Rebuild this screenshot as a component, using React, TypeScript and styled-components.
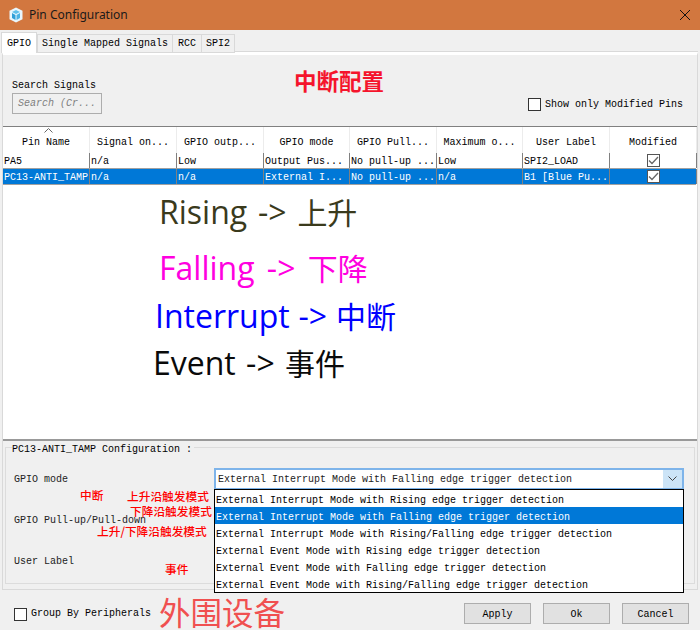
import React from "react";
import styled, { createGlobalStyle } from "styled-components";

const Global = createGlobalStyle`
  html, body { margin: 0; padding: 0; background: #f0f0f0; }
  * { box-sizing: border-box; }
`;
const mono = `"Liberation Mono", "DejaVu Sans Mono", "Noto Sans CJK SC", monospace`;
const sans = `"Open Sans", "Noto Sans CJK SC", sans-serif`;

const Window = styled.div`
  position: relative; width: 700px; height: 630px; overflow: hidden;
  display: flex; flex-direction: column; background: #f0f0f0;
  font: 10px/12px ${mono}; color: #000;
`;
const TitleBar = styled.div`
  height: 30px; flex: none; background: #d2773f; display: flex; align-items: center;
  padding: 0 10px 0 8px; gap: 5px;
`;
const TitleText = styled.span`
  font: 12px/16px "Noto Sans", sans-serif; color: #1a1a1a; flex: 1;
`;
const TabStrip = styled.div`
  height: 23px; flex: none; display: flex; align-items: flex-end; padding: 2px 0 0 1px; position: relative; z-index: 1;
`;
const Tab = styled.div<{ $active?: boolean; $width: number }>`
  width: ${(p) => p.$width}px;
  height: ${(p) => (p.$active ? 21 : 19)}px;
  padding-top: 1px; display: flex; align-items: center; justify-content: center;
  background: ${(p) => (p.$active ? "#fff" : "#f0f0f0")};
  border: 1px solid #d9d9d9; border-bottom: ${(p) => (p.$active ? "none" : "1px solid #d9d9d9")};
  margin-right: ${(p) => (p.$active ? 0 : -1)}px;
`;
const TabPanel = styled.div`
  width: 696px; height: 538px; flex: none; margin: -1px 0 0 2px; border: 1px solid #d9d9d9;
  border-top: 3px solid #fff;
  display: flex; flex-direction: column; background: #f0f0f0;
  box-shadow: 0 -1px 0 #d9d9d9;
`;
const SearchBar = styled.div`
  height: 71px; flex: none; display: flex; justify-content: space-between; align-items: flex-end;
  padding: 0 14px 12px 9px;
`;
const SearchGroup = styled.div`display: flex; flex-direction: column; gap: 1px;`;
const SearchInput = styled.div`
  width: 90px; height: 21px; background: #f0f0f0; border: 1px solid #adadad; padding: 1px 5px 0;
  display: flex; align-items: center; font-style: italic; color: #808080;
`;
const CheckLabel = styled.label`display: flex; align-items: center; gap: 4px;`;
const ModifiedFilter = styled(CheckLabel)`margin-bottom: 3px;`;
const GroupToggle = styled(CheckLabel)`margin-top: 2px;`;
const Box = styled.span`
  width: 13px; height: 13px; border: 1px solid #333; background: #fff; display: block; flex: none;
`;
const Table = styled.div`
  height: 315px; flex: none; background: #fff; border-top: 1px solid #808080; border-bottom: 2px solid #999;
  display: flex; flex-direction: column;
`;
const grid = `grid-template-columns: 87px 87px 87px 86px 87px 86px 87px 87px;`;
const HeaderRow = styled.div`
  height: 26px; flex: none; display: grid; ${grid} background: #fff; width: 693px;
`;
const HeaderCell = styled.div`
  position: relative; display: flex; align-items: center; justify-content: center; padding-top: 6px;
  border-right: 1px solid #ececec; white-space: nowrap; overflow: hidden;
`;
const SortArrow = styled.svg`position: absolute; top: 1px; left: 41px;`;
const Row = styled.div<{ $selected?: boolean }>`
  height: 16px; flex: none; display: grid; ${grid} width: 693px;
  background: ${(p) => (p.$selected ? "#0078d7" : "#fff")};
  color: ${(p) => (p.$selected ? "#fff" : "#000")};
  border-bottom: 1px solid #a0a0a0;
`;
const Cell = styled.div`
  padding: 3px 0 0 1px; display: flex; align-items: center; white-space: nowrap; overflow: hidden;
  border-right: 1px solid #808080;
`;
const CheckColumn = styled.div`
  display: flex; align-items: center; justify-content: center; border-right: 1px solid #808080;
`;
const CheckCell = styled.span`
  width: 13px; height: 13px; background: #fff; border: 1px solid #555; display: flex; align-items: center; justify-content: center;
`;
const ConfigSection = styled.div`
  flex: 1; padding: 6px 2px 5px 2px; min-height: 0;
`;
const Fieldset = styled.div`
  position: relative; height: 100%; border: 1px solid #dcdcdc; padding: 0 0 0 8px;
  display: flex; flex-direction: column;
`;
const Legend = styled.div`
  position: absolute; top: -4px; left: 6px; background: #f0f0f0; padding: 0 2px 0 0;
`;
const ConfigRow = styled.div`
  height: 41px; flex: none; display: flex; align-items: center; color: #222;
`;
const ConfigList = styled.div`margin-top: 10px; display: flex; flex-direction: column;`;
const ConfigLabel = styled.div`width: 200px; flex: none; padding-top: 3px;`;
const Select = styled.div`
  width: 470px; height: 22px; border: 2px solid #7eb4ea; background: #fff; display: flex; align-items: center;
  padding-left: 2px; position: relative;
`;
const SelectText = styled.span`flex: 1; padding-top: 2px;`;
const SelectArrow = styled.span`
  width: 19px; height: 18px; background: #cce4f7; display: flex; align-items: center; justify-content: center;
`;
const Dropdown = styled.ul`
  position: absolute; left: 214px; top: 489px; width: 470px; height: 104px; margin: 0; padding: 0;
  list-style: none; background: #fff; border: 1px solid #000; z-index: 3;
`;
const Option = styled.li<{ $selected?: boolean }>`
  height: 17px; padding: 5px 0 0 1px; white-space: nowrap;
  background: ${(p) => (p.$selected ? "#0078d7" : "transparent")};
  color: ${(p) => (p.$selected ? "#fff" : "#000")};
`;
const Footer = styled.div`
  flex: 1; display: flex; align-items: center; justify-content: space-between; padding: 6px 11px 0 14px;
`;
const Buttons = styled.div`display: flex; gap: 12px;`;
const Button = styled.button`
  width: 67px; height: 21px; padding: 3px 0 0; background: #e1e1e1; border: 1px solid #adadad; font: 10px/12px ${mono}; color: #000;
`;
const Caption = styled.div<{ $left: number; $top: number; $color: string; $spacing: number }>`
  position: absolute; left: ${(p) => p.$left}px; top: ${(p) => p.$top}px;
  color: ${(p) => p.$color}; font: 400 32px/40px ${sans}; word-spacing: ${(p) => p.$spacing}px;
  white-space: nowrap; z-index: 4;
`;
const CaptionCjk = styled.span`
  font: 400 30px/40px "Noto Sans CJK SC", sans-serif;
`;
const Note = styled.div<{ $left: number; $top: number }>`
  position: absolute; left: ${(p) => p.$left}px; top: ${(p) => p.$top}px;
  color: #f00; font: 500 11.7px/14px "Noto Sans CJK SC", sans-serif; white-space: nowrap; z-index: 4;
`;
const Heading = styled.div`
  position: absolute; left: 294px; top: 65px; color: #f5142c; font: 700 22.5px/30px "Noto Sans CJK SC", sans-serif; white-space: nowrap;
`;
const Peripheral = styled.div`
  position: absolute; left: 159px; top: 593px; color: #f05050; font: 400 31.5px/36px "Noto Sans CJK SC", sans-serif; white-space: nowrap;
`;

const AppIcon = () => (
  <svg width="16" height="16" viewBox="0 0 16 16">
    <path d="M8 0.5l6.5 3.2v8.6L8 15.5l-6.5-3.2V3.7z" fill="#e8f6fd" />
    <path d="M8 3l4 2-4 2-4-2z" fill="#5fc0ea" />
    <path d="M4 6l3.5 2v5L4 11z" fill="#2f9fd8" />
    <path d="M12 6L8.5 8v5l3.5-2z" fill="#4bb3e4" />
  </svg>
);
const CloseIcon = () => (
  <svg width="10" height="10" viewBox="0 0 10 10">
    <path d="M0 0l10 10M10 0L0 10" stroke="#111" strokeWidth="1" fill="none" />
  </svg>
);
const CheckMark = () => (
  <svg width="11" height="11" viewBox="0 0 11 11">
    <path d="M1 5.5l3 3L10 2" stroke="#666" strokeWidth="1.3" fill="none" />
  </svg>
);
const Chevron = () => (
  <svg width="9" height="6" viewBox="0 0 9 6">
    <path d="M0.5 0.5l4 4 4-4" stroke="#444" strokeWidth="1" fill="none" />
  </svg>
);

const headers = ["Pin Name", "Signal on...", "GPIO outp...", "GPIO mode", "GPIO Pull...", "Maximum o...", "User Label", "Modified"];
const rows = [
  ["PA5", "n/a", "Low", "Output Pus...", "No pull-up ...", "Low", "SPI2_LOAD"],
  ["PC13-ANTI_TAMP", "n/a", "n/a", "External I...", "No pull-up ...", "n/a", "B1 [Blue Pu..."],
];
const options = [
  "External Interrupt Mode with Rising edge trigger detection",
  "External Interrupt Mode with Falling edge trigger detection",
  "External Interrupt Mode with Rising/Falling edge trigger detection",
  "External Event Mode with Rising edge trigger detection",
  "External Event Mode with Falling edge trigger detection",
  "External Event Mode with Rising/Falling edge trigger detection",
];

export default function App() {
  return (
    <Window>
      <Global />
      <TitleBar>
        <AppIcon />
        <TitleText>Pin Configuration</TitleText>
        <CloseIcon />
      </TitleBar>
      <TabStrip>
        <Tab $active $width={36}>GPIO</Tab>
        <Tab $width={136}>Single Mapped Signals</Tab>
        <Tab $width={30}>RCC</Tab>
        <Tab $width={34}>SPI2</Tab>
      </TabStrip>
      <TabPanel>
        <SearchBar>
          <SearchGroup>
            <span>Search Signals</span>
            <SearchInput>Search (Cr...</SearchInput>
          </SearchGroup>
          <ModifiedFilter>
            <Box />
            Show only Modified Pins
          </ModifiedFilter>
        </SearchBar>
        <Table>
          <HeaderRow>
            {headers.map((h, i) => (
              <HeaderCell key={h}>
                {i === 0 && (
                  <SortArrow width="9" height="5" viewBox="0 0 9 5">
                    <path d="M0.5 4.5l4-4 4 4" stroke="#666" fill="none" />
                  </SortArrow>
                )}
                {h}
              </HeaderCell>
            ))}
          </HeaderRow>
          {rows.map((r, i) => (
            <Row key={r[0]} $selected={i === 1}>
              {r.map((c, j) => (
                <Cell key={j}>{c}</Cell>
              ))}
              <CheckColumn>
                <CheckCell>
                  <CheckMark />
                </CheckCell>
              </CheckColumn>
            </Row>
          ))}
        </Table>
        <ConfigSection>
          <Fieldset>
            <Legend>PC13-ANTI_TAMP Configuration :</Legend>
            <ConfigList>
              <ConfigRow>
                <ConfigLabel>GPIO mode</ConfigLabel>
                <Select>
                  <SelectText>External Interrupt Mode with Falling edge trigger detection</SelectText>
                  <SelectArrow>
                    <Chevron />
                  </SelectArrow>
                </Select>
              </ConfigRow>
              <ConfigRow>
                <ConfigLabel>GPIO Pull-up/Pull-down</ConfigLabel>
              </ConfigRow>
              <ConfigRow>
                <ConfigLabel>User Label</ConfigLabel>
              </ConfigRow>
            </ConfigList>
          </Fieldset>
        </ConfigSection>
      </TabPanel>
      <Footer>
        <GroupToggle>
          <Box />
          Group By Peripherals
        </GroupToggle>
        <Buttons>
          <Button>Apply</Button>
          <Button>Ok</Button>
          <Button>Cancel</Button>
        </Buttons>
      </Footer>
      <Dropdown>
        {options.map((o, i) => (
          <Option key={o} $selected={i === 1}>
            {o}
          </Option>
        ))}
      </Dropdown>
      <Heading>中断配置</Heading>
      <Caption $left={159} $top={191} $color="#3a3a1c" $spacing={2.5}>Rising -&gt; <CaptionCjk>上升</CaptionCjk></Caption>
      <Caption $left={159} $top={247} $color="#ff00e0" $spacing={4}>Falling -&gt; <CaptionCjk>下降</CaptionCjk></Caption>
      <Caption $left={155} $top={295} $color="#0000ff" $spacing={0.5}>Interrupt -&gt; <CaptionCjk>中断</CaptionCjk></Caption>
      <Caption $left={153} $top={342} $color="#0a0a0a" $spacing={2}>Event -&gt; <CaptionCjk>事件</CaptionCjk></Caption>
      <Note $left={80} $top={488}>中断</Note>
      <Note $left={127} $top={489}>上升沿触发模式</Note>
      <Note $left={130} $top={504}>下降沿触发模式</Note>
      <Note $left={97} $top={524}>上升/下降沿触发模式</Note>
      <Note $left={165} $top={562}>事件</Note>
      <Peripheral>外围设备</Peripheral>
    </Window>
  );
}
